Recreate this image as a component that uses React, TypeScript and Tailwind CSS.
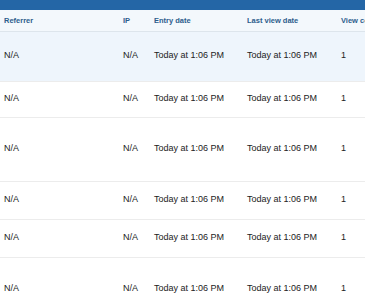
import React from "react";

const ROWS = [
  { h: "h-[50px]", active: true },
  { h: "h-[36px]", active: false },
  { h: "h-[64px]", active: false },
  { h: "h-[38px]", active: false },
  { h: "h-[38px]", active: false },
  { h: "h-[64px]", active: false },
];

export default function App() {
  return (
    <div className="w-[365px] h-[300px] overflow-hidden bg-white font-['Liberation_Sans',Arial,sans-serif]">
      {/* top bar */}
      <div className="h-[10px] bg-[#2466a6]" />
      <table className="w-[420px] table-fixed border-collapse">
        <colgroup>
          <col className="w-[119px]" />
          <col className="w-[31px]" />
          <col className="w-[93px]" />
          <col className="w-[94px]" />
          <col />
        </colgroup>
        <thead>
          <tr className="h-[21px] bg-[#f3f8fc] border-b border-[#dde5ec] text-left text-[7.5px] font-bold text-[#2c5d8c]">
            <th className="pl-[4px] font-bold">Referrer</th>
            <th className="pl-[4px] font-bold">IP</th>
            <th className="pl-[4px] font-bold">Entry date</th>
            <th className="pl-[4px] font-bold">Last view date</th>
            <th className="pl-[4px] font-bold whitespace-nowrap">View count</th>
          </tr>
        </thead>
        <tbody>
          {ROWS.map((row, i) => (
            <tr
              key={i}
              className={`${row.h} border-b border-[#ececec] text-[9px] text-[#222] ${
                row.active ? "bg-[#eef5fc]" : "bg-white"
              }`}
            >
              <td className="pl-[4px]">N/A</td>
              <td className="pl-[4px]">N/A</td>
              <td className="pl-[4px] whitespace-nowrap">Today at 1:06 PM</td>
              <td className="pl-[4px] whitespace-nowrap">Today at 1:06 PM</td>
              <td className="pl-[4px]">1</td>
            </tr>
          ))}
        </tbody>
      </table>
    </div>
  );
}
